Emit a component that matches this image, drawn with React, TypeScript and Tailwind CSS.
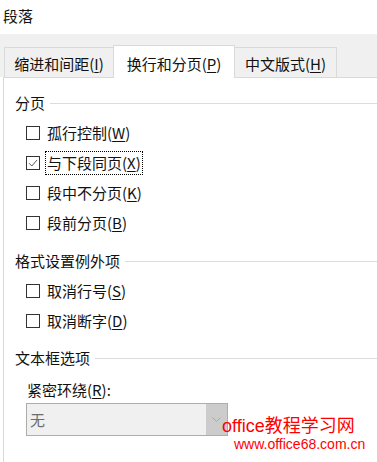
import React from "react";

function Box({ checked }: { checked?: boolean }) {
  return (
    <div className="w-[14px] h-[14px] border border-[#333333] bg-white flex items-center justify-center shrink-0">
      {checked && (
        <svg width="12" height="12" viewBox="0 0 12 12">
          <path d="M2 6.2 L4.8 9 L10 3" fill="none" stroke="#5a5a5a" strokeWidth="1" />
        </svg>
      )}
    </div>
  );
}

function Row({ label, acc, checked, focus }: { label: string; acc: string; checked?: boolean; focus?: boolean }) {
  return (
    <div className="h-[30px] flex items-center pl-[11px]">
      <Box checked={checked} />
      {focus ? (
        <span className="ml-[5px] border border-dotted border-black px-[1px] py-[1px] leading-[20px]">
          {label}(<u className="underline-offset-2">{acc}</u>)
        </span>
      ) : (
        <span className="ml-[7px] leading-[20px]">
          {label}(<u className="underline-offset-2">{acc}</u>)
        </span>
      )}
    </div>
  );
}

function Header({ text }: { text: string }) {
  return (
    <div className="h-[30px] flex items-center gap-[5px]">
      <span className="leading-[20px]">{text}</span>
      <div className="flex-1 h-px bg-[#dcdcdc]" />
    </div>
  );
}

export default function App() {
  return (
    <div className="w-[377px] h-[462px] bg-white overflow-hidden relative text-[#111111] text-[15px] font-['Noto_Sans_CJK_SC',sans-serif]">
      <div className="h-[34px] pl-[3px] pt-[6px] leading-[20px]">段落</div>
      <div className="h-[43px] bg-[#f0f0f0] flex items-end pl-[4px]">
        <div className="w-[109px] h-[30px] border-l border-t border-[#d9d9d9] text-center pt-[6px] leading-[20px]">
          缩进和间距(<u className="underline-offset-2">I</u>)
        </div>
        <div className="relative z-10 top-px w-[122px] h-[33px] bg-white border-l border-t border-r border-[#d9d9d9] text-center pt-[8px] leading-[20px]">
          换行和分页(<u className="underline-offset-2">P</u>)
        </div>
        <div className="w-[102px] h-[30px] border-t border-r border-[#d9d9d9] text-center pt-[6px] leading-[20px]">
          中文版式(<u className="underline-offset-2">H</u>)
        </div>
      </div>
      <div className="ml-[3px] border-l border-t border-[#d9d9d9] pl-[11px] pt-[10px] h-[400px]">
        <Header text="分页" />
        <Row label="孤行控制" acc="W" />
        <Row label="与下段同页" acc="X" checked focus />
        <Row label="段中不分页" acc="K" />
        <Row label="段前分页" acc="B" />
        <div className="mt-[8px]">
          <Header text="格式设置例外项" />
        </div>
        <Row label="取消行号" acc="S" />
        <Row label="取消断字" acc="D" />
        <div className="mt-[7px]">
          <Header text="文本框选项" />
        </div>
        <div className="h-[26px] flex items-center pl-[12px] mt-[4px]">
          <span className="leading-[20px]">
            紧密环绕(<u className="underline-offset-2">R</u>):
          </span>
        </div>
        <div className="ml-[11px] w-[202px] h-[33px] border border-[#adadad] bg-[#f0f0f0] flex">
          <div className="flex-1 flex items-center pl-[3px] text-[#6d6d6d] leading-[20px]">无</div>
          <div className="w-[21px] bg-[#cccccc] flex items-center justify-center">
            <svg width="9" height="6" viewBox="0 0 9 6">
              <path d="M0.5 0.5 L4.5 4.5 L8.5 0.5" fill="none" stroke="#a8a8a8" strokeWidth="1" />
            </svg>
          </div>
        </div>
      </div>
      <div className="absolute left-[222px] top-[413px] text-[#ff0000] text-[18px] leading-[22px] whitespace-nowrap">
        <span className="font-['Liberation_Sans',sans-serif]">office</span>
        <span className="font-['Noto_Sans_CJK_SC',sans-serif]">教程学习网</span>
      </div>
      <div className="absolute left-[234px] top-[436px] text-[#ff0000] text-[14px] leading-[16px] whitespace-nowrap font-['Liberation_Sans',sans-serif]">
        www.office68.com.cn
      </div>
    </div>
  );
}
